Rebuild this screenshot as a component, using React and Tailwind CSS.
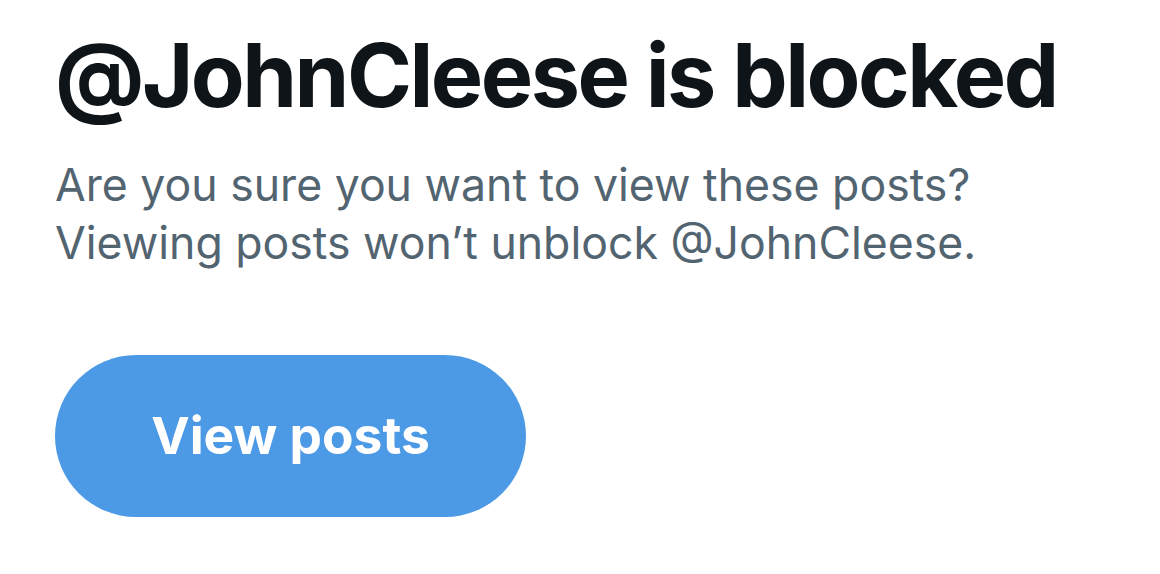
import React from "react";

const BlockedNotice = () => {
  return (
    <div className="bg-white w-full min-h-screen px-[55px] pt-[20px] font-['Inter',sans-serif]">
      <h1 className="text-[88px] leading-[110px] font-bold text-[#0f1419] tracking-[-2.5px] whitespace-nowrap">
        @JohnCleese is blocked
      </h1>
      <p className="mt-[26px] text-[44.6px] leading-[58px] text-[#536471]">
        Are you sure you want to view these posts?
        <br />
        Viewing posts won’t unblock @JohnCleese.
      </p>
      <button className="mt-[83px] w-[471px] h-[162px] rounded-full bg-[#4c99e6] text-white text-[51.5px] font-bold flex items-center justify-center">
        View posts
      </button>
    </div>
  );
};

export default function App() {
  return <BlockedNotice />;
}
